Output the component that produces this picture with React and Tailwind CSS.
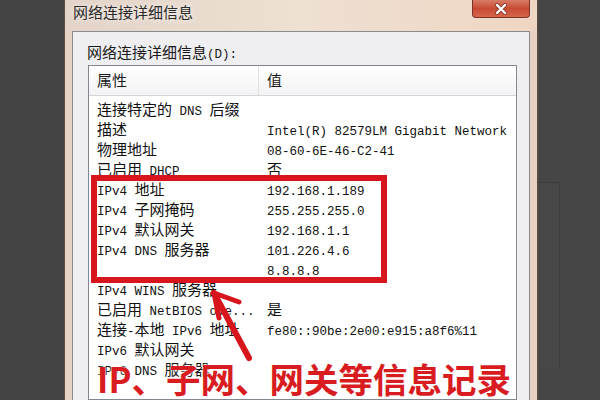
import React from "react";

const CJK = /[\u3000-\u303f\u4e00-\u9fff\uff00-\uffef]/;

function Mixed({ text }) {
  const runs = [];
  for (const ch of text) {
    const c = CJK.test(ch);
    if (runs.length && runs[runs.length - 1].c === c) runs[runs.length - 1].t += ch;
    else runs.push({ c, t: ch });
  }
  return (
    <>
      {runs.map((r, i) =>
        r.c ? (
          <span key={i} className="font-['Noto_Sans_CJK_SC',sans-serif] text-[15px]">
            {r.t}
          </span>
        ) : (
          <span key={i} className="font-['Liberation_Mono',monospace] text-[12.5px] whitespace-pre">
            {r.t}
          </span>
        )
      )}
    </>
  );
}

const rows = [
  ["连接特定的 DNS 后缀", ""],
  ["描述", "Intel(R) 82579LM Gigabit Network"],
  ["物理地址", "08-60-6E-46-C2-41"],
  ["已启用 DHCP", "否"],
  ["IPv4 地址", "192.168.1.189"],
  ["IPv4 子网掩码", "255.255.255.0"],
  ["IPv4 默认网关", "192.168.1.1"],
  ["IPv4 DNS 服务器", "101.226.4.6"],
  ["", "8.8.8.8"],
  ["IPv4 WINS 服务器", ""],
  ["已启用 NetBIOS ove...", "是"],
  ["连接-本地 IPv6 地址", "fe80::90be:2e00:e915:a8f6%11"],
  ["IPv6 默认网关", ""],
  ["IPv6 DNS 服务器", ""],
];

export default function App() {
  return (
    <div className="relative w-[600px] h-[400px] overflow-hidden flex bg-[#454545]">
      <div className="w-[64px] shrink-0 bg-[#434343]" />
      <div className="w-[474px] shrink-0 flex flex-col bg-[#e8d3c2] border-x border-[#5e4f45]">
        <div className="h-[31px] shrink-0 flex items-start bg-gradient-to-r from-[#e3d3c8] via-[#eee0d3] to-[#efd6c2]">
          <span className="pl-[8px] pt-[2px] leading-[20px] text-[15px] text-[#2a2a2a] font-['Noto_Sans_CJK_SC',sans-serif] [text-shadow:0_0_6px_#fff]">
            网络连接详细信息
          </span>
          <div className="ml-auto mr-[7px] w-[58px] h-[18px] rounded-b-[4px] border border-t-0 border-[#7a3426] bg-gradient-to-b from-[#d77b66] via-[#c84a33] to-[#d6654c] flex items-center justify-center">
            <svg width="14" height="12" viewBox="0 0 14 12">
              <path d="M3 2 L11 10 M11 2 L3 10" stroke="#8a3a2c" strokeWidth="4" strokeLinecap="round" />
              <path d="M3 2 L11 10 M11 2 L3 10" stroke="#ffffff" strokeWidth="2.4" strokeLinecap="round" />
            </svg>
          </div>
        </div>
        <div className="flex-1 mx-[7px] border border-b-0 border-[#8b8b8b] bg-[#efeef1] pl-[15px] pr-[12px] pt-[10px] flex flex-col">
          <div className="h-[20px] leading-[20px] text-[#1a1a1a] -ml-px whitespace-nowrap">
            <Mixed text="网络连接详细信息(D):" />
          </div>
          <div className="mt-[3px] flex-1 border border-[#838790] bg-white flex flex-col">
            <div className="h-[30px] shrink-0 flex border-b border-[#d5d5d5] bg-gradient-to-b from-white to-[#f3f3f5] text-[#1a1a1a]">
              <div className="w-[170px] pl-2 border-r border-[#e2e2e2] flex items-center">
                <Mixed text="属性" />
              </div>
              <div className="pl-2 flex items-center">
                <Mixed text="值" />
              </div>
            </div>
            <div className="pt-[3px] flex flex-col text-[#111]">
              {rows.map(([k, v], i) => (
                <div key={i} className="h-[20px] leading-[20px] flex whitespace-nowrap">
                  <div className="w-[170px] pl-2 overflow-hidden">
                    <Mixed text={k} />
                  </div>
                  <div className="pl-2">
                    <Mixed text={v} />
                  </div>
                </div>
              ))}
            </div>
          </div>
        </div>
      </div>
      <div className="flex-1 bg-[#464646] pt-[182px]">
        <div className="w-[22px] h-[186px] border-t border-r border-[#3c3c3c] bg-[#474747]" />
      </div>

      {/* annotations */}
      <div className="absolute left-[91px] top-[175px] w-[296px] h-[108px] border-[6px] border-[#d8141c]" />
      <svg className="absolute left-0 top-0 pointer-events-none" width="600" height="400" viewBox="0 0 600 400">
        <path d="M214 293 L249 358" stroke="#d8141c" strokeWidth="6" strokeLinecap="round" />
        <path d="M214 293 L239 302 M214 293 L219 318" stroke="#d8141c" strokeWidth="5" strokeLinecap="round" />
      </svg>
      <div className="absolute left-[97px] top-[361px] leading-none whitespace-nowrap text-[34.5px] font-bold text-[#d81c1f] font-['Noto_Sans_CJK_SC',sans-serif] [text-shadow:0_0_3px_#fff]">
        IP、子网、网关等信息记录
      </div>
    </div>
  );
}
